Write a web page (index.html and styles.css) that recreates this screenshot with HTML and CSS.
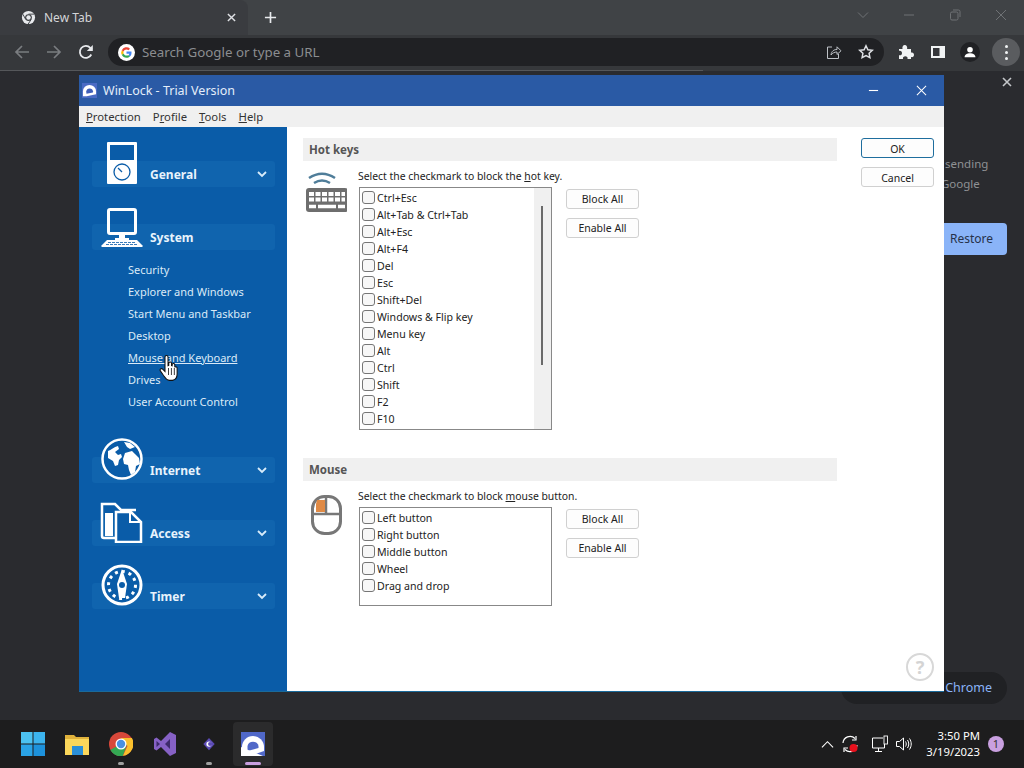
FILE: index.html
```html
<!DOCTYPE html>
<html>
<head>
<meta charset="utf-8">
<title>WinLock - Trial Version</title>
<link rel="stylesheet" href="styles.css">
</head>
<body>
<div class="tabstrip">
    <div class="tab">
        <svg class="tab-favicon" viewBox="0 0 16 16"><circle cx="8" cy="8" r="7" fill="#e8eaed"/><circle cx="8" cy="8" r="3.6" fill="#3c3f43"/><circle cx="8" cy="8" r="2.4" fill="#e8eaed"/><path d="M8 4.4h6M5 10 2 4.5M10.8 10.2 7.6 15" stroke="#3c3f43" stroke-width="1"/></svg>
        <span class="tab-title">New Tab</span>
        <svg class="tab-close" viewBox="0 0 10 10"><path d="M1 1l8 8M9 1l-8 8" stroke="#dfe1e5" stroke-width="1.6"/></svg>
    </div>
    <svg class="tab-new" viewBox="0 0 14 14"><path d="M7 1v12M1 7h12" stroke="#e8eaed" stroke-width="1.8"/></svg>
    <div class="caption">
        <svg viewBox="0 0 12 12"><path d="M1 3.500l5 5 5-5" fill="none" stroke="#6f7275" stroke-width="1"/></svg>
        <svg viewBox="0 0 12 12"><path d="M1 6h10" stroke="#6f7275" stroke-width="1"/></svg>
        <svg viewBox="0 0 12 12"><rect x="1.500" y="3" width="7.500" height="8" rx="1.500" fill="none" stroke="#6f7275"/><path d="M4 1h5.500a1.500 1.500 0 0 1 1.500 1.500V8" fill="none" stroke="#6f7275"/></svg>
        <svg viewBox="0 0 12 12"><path d="M1 1l10 10M11 1L1 11" stroke="#6f7275" stroke-width="1"/></svg>
    </div>
</div>
<div class="toolbar">
    <div class="nav">
        <svg viewBox="0 0 16 16"><path d="M15 8H2M8 2 2 8l6 6" fill="none" stroke="#7a7d80" stroke-width="1.700"/></svg>
        <svg viewBox="0 0 16 16"><path d="M1 8h13M8 2l6 6-6 6" fill="none" stroke="#7a7d80" stroke-width="1.700"/></svg>
        <svg viewBox="0 0 16 16"><path d="M13.300 10.500A6 6 0 1 1 12.300 3.800L14 5.500" fill="none" stroke="#e8eaed" stroke-width="1.800"/><path d="M14.800 1v6h-6z" fill="#e8eaed"/></svg>
    </div>
    <div class="omnibox">
        <svg class="g-logo" viewBox="0 0 18 18">
            <circle cx="9" cy="9" r="9" fill="#fff"/>
            <path d="M14.300 9.200c0-.4 0-.8-.1-1.200H9v2.200h3a2.600 2.600 0 0 1-1.100 1.700l1.800 1.400c1-1 1.600-2.400 1.600-4.100z" fill="#4285f4"/>
            <path d="M9 14.500c1.500 0 2.700-.5 3.700-1.300l-1.800-1.400c-.5.300-1.100.5-1.900.5-1.400 0-2.700-1-3.100-2.300L4 11.400c.9 1.900 2.800 3.100 5 3.100z" fill="#34a853"/>
            <path d="M5.900 10A3.300 3.300 0 0 1 5.900 8L4 6.600a5.600 5.600 0 0 0 0 4.800z" fill="#fbbc05"/>
            <path d="M9 5.700c.8 0 1.500.3 2.100.8l1.600-1.600A5.500 5.500 0 0 0 4 6.600L5.900 8C6.300 6.700 7.600 5.700 9 5.700z" fill="#ea4335"/>
        </svg>
        <span class="omnibox-text">Search Google or type a URL</span>
        <div class="omnibox-actions">
            <svg viewBox="0 0 16 16"><path d="M6 3H1.500v11.500h11V10" fill="none" stroke="#bdc1c6"/><path d="M5 11c.5-4 3-5.500 6-5.500V2.800l4 4-4 3.700V8C8.500 8 6.500 9 5 11z" fill="none" stroke="#bdc1c6"/></svg>
            <svg viewBox="0 0 16 16"><path d="M8 1.800l1.900 4 4.400.5-3.200 3 .8 4.400L8 11.600l-3.900 2.100.8-4.400-3.200-3 4.400-.5z" fill="none" stroke="#dfe1e5" stroke-width="1.500"/></svg>
        </div>
    </div>
    <div class="tools">
        <svg viewBox="0 0 16 16"><path d="M1 5h3.500C4 3 5 1 6.800 1s2.800 2 2.300 4H13v3.500c2-.5 3 .7 3 2.300s-1 2.800-3 2.300V15H9.500c.5-2-.7-2.800-2.200-2.800S4.500 13 5 15H1v-3.800c2 .5 3-.7 3-2.200S3 6.300 1 6.800z" fill="#f1f3f4"/></svg>
        <svg viewBox="0 0 16 16"><path d="M1 2h14v12H1z" fill="#f1f3f4"/><path d="M3 4h6.500v8H3z" fill="#35363a"/></svg>
        <span class="profile"><svg viewBox="0 0 16 16"><circle cx="8" cy="5.500" r="3.200" fill="#fff"/><path d="M1.800 14c0-3 3-4.500 6.200-4.500s6.200 1.500 6.200 4.500z" fill="#fff"/></svg></span>
        <span class="menu-btn"><i></i><i></i><i></i></span>
    </div>
</div>

<div class="page">
    <svg class="promo-close" viewBox="0 0 10 10"><path d="M1 1l8 8M9 1l-8 8" stroke="#c4c7ca" stroke-width="1.600"/></svg>
    <div class="promo-text">sending<br>Google</div>
    <div class="promo-restore">Restore</div>
    <div class="customize">Customize Chrome</div>

    <div class="window">
        <div class="titlebar">
            <svg class="app-icon" viewBox="0 0 16 16"><rect width="16" height="16" fill="#4a6bc4"/><path d="M1 9a7 7 0 0 1 14 0v3L5 14H1z" fill="#fff"/><path d="M4.500 9a3.700 3.700 0 0 1 7.300 0l-.2 1.200-6.800 1.200z" fill="#3f5fb8"/></svg>
            <span class="title-text">WinLock - Trial Version</span>
            <svg class="title-btn" viewBox="0 0 12 12"><path d="M1 6h10" stroke="#fff" stroke-width="1.200"/></svg>
            <svg class="title-btn" viewBox="0 0 12 12"><path d="M1 1l10 10M11 1L1 11" stroke="#fff" stroke-width="1.100"/></svg>
        </div>
        <div class="menubar">
            <span><u>P</u>rotection</span>
            <span>P<u>r</u>ofile</span>
            <span><u>T</u>ools</span>
            <span><u>H</u>elp</span>
        </div>
        <div class="client">
            <div class="sidebar">
                <div class="group">
                    <svg class="group-icon" viewBox="0 0 44 44"><rect x="7" y="2" width="30" height="42" rx="1" fill="#fff"/><rect x="10" y="5" width="24" height="15" fill="#0a5ca8"/><circle cx="22" cy="32" r="8" fill="none" stroke="#0a5ca8" stroke-width="1.300"/><path d="M22 32l-4-4" stroke="#0a5ca8" stroke-width="1.300"/></svg>
                    <span class="group-name">General</span>
                    <svg class="chevron" viewBox="0 0 10 8"><path d="M1 2l4 4 4-4" fill="none" stroke="#d8ecfa" stroke-width="1.800"/></svg>
                </div>
                <div class="group">
                    <svg class="group-icon" viewBox="0 0 44 44"><rect x="8.500" y="6.500" width="27" height="24" rx="1.500" fill="none" stroke="#fff" stroke-width="3"/><path d="M19 32h6v3h4v2H15v-2h4z" fill="#fff"/><path d="M7 37h30l6 6-1 1H2l-1-1z" fill="#fff"/><path d="M8 39.500h28M6 41.500h32" stroke="#0a5ca8" stroke-width=".8" stroke-dasharray="3 1"/></svg>
                    <span class="group-name">System</span>
                </div>
                <div class="sublist">
                    <a>Security</a>
                    <a>Explorer and Windows</a>
                    <a>Start Menu and Taskbar</a>
                    <a>Desktop</a>
                    <a class="hover">Mouse and Keyboard</a>
                    <a>Drives</a>
                    <a>User Account Control</a>
                </div>
                <div class="group internet">
                    <svg class="group-icon" viewBox="0 0 44 44"><circle cx="22" cy="23" r="19.500" fill="#0a5ca8" stroke="#fff" stroke-width="2.500"/><path d="M8 15c3-1 6-4 10-5l1 3-4 3 3 3 3-1 1 3-3 3-1 5-3 1-2-5-5-3zM24 6l6 1 5 4-5 2-3-2zM25 17l7-2 3 3 4 4 1 6-4 2-1 6-4 3-2-5-1-5-4-1-1-5z" fill="#fff"/></svg>
                    <span class="group-name">Internet</span>
                    <svg class="chevron" viewBox="0 0 10 8"><path d="M1 2l4 4 4-4" fill="none" stroke="#d8ecfa" stroke-width="1.800"/></svg>
                </div>
                <div class="group">
                    <svg class="group-icon" viewBox="0 0 44 44"><path d="M15 39H4a2 2 0 0 1-2-2V5h13l6 6h15" fill="none" stroke="#fff" stroke-width="2.500"/><path d="M5 14h8v23H5z" fill="#fff"/><path d="M16 43V13h15l10 10v20z" fill="#0a5ca8" stroke="#fff" stroke-width="2.500"/><path d="M30 14v9h10" fill="none" stroke="#fff" stroke-width="2"/></svg>
                    <span class="group-name">Access</span>
                    <svg class="chevron" viewBox="0 0 10 8"><path d="M1 2l4 4 4-4" fill="none" stroke="#d8ecfa" stroke-width="1.800"/></svg>
                </div>
                <div class="group">
                    <svg class="group-icon" viewBox="0 0 44 44"><circle cx="22" cy="23" r="19" fill="#0a5ca8" stroke="#fff" stroke-width="3"/><circle cx="22" cy="23" r="13.500" fill="none" stroke="#fff" stroke-width="3" stroke-dasharray="3 4"/><path d="M22 7l5 15-2 14h-6l-2-14z" fill="#fff"/><circle cx="22" cy="23" r="3" fill="#0a5ca8"/></svg>
                    <span class="group-name">Timer</span>
                    <svg class="chevron" viewBox="0 0 10 8"><path d="M1 2l4 4 4-4" fill="none" stroke="#d8ecfa" stroke-width="1.800"/></svg>
                </div>
                <svg class="hand" viewBox="0 0 16 24"><path d="M5 2.500a1.300 1.300 0 0 1 2.600 0V10l.6-.2V8a1.200 1.200 0 0 1 2.400 0v2l.5.100V9a1.200 1.200 0 0 1 2.300 0v2l.4.100a1.100 1.100 0 0 1 1.600 1v5c0 2.500-1.500 5-4 5.500H8.500C6 22.500 5 20 3.500 18L1 14.500c-.8-1.300.8-2.700 2-1.500L5 15z" fill="#fff" stroke="#111" stroke-width=".9"/><path d="M8 12v6M10.500 12v6M13 12v6" stroke="#111" stroke-width=".7"/></svg>
            </div>
            <div class="main">
                <div class="sections">
                    <div class="section">
                        <div class="section-head">Hot keys</div>
                        <div class="section-body">
                            <svg class="section-icon" viewBox="0 0 44 44"><path d="M6 7c9-6 17-6 26 0M11 12c5-3 11-3 16 0" fill="none" stroke="#4f7d99" stroke-width="2.500"/><rect x="3" y="17" width="42" height="24" rx="3" fill="#6e6e6e"/><path d="M6 23h36M6 28.500h36" stroke="#fff" stroke-width="4" stroke-dasharray="5 1.500"/><path d="M6 35.500h7M15 35.500h18M35 35.500h7" stroke="#fff" stroke-width="3.500"/></svg>
                            <div class="section-col">
                                <div class="hint">Select the checkmark to block the <u>h</u>ot key.</div>
                                <div class="list-row">
                                    <div class="listbox listbox-keys">
                                        <div class="scrollbar"><div class="thumb"></div></div>
                                        <label><span class="check"></span>Ctrl+Esc</label>
                                        <label><span class="check"></span>Alt+Tab &amp; Ctrl+Tab</label>
                                        <label><span class="check"></span>Alt+Esc</label>
                                        <label><span class="check"></span>Alt+F4</label>
                                        <label><span class="check"></span>Del</label>
                                        <label><span class="check"></span>Esc</label>
                                        <label><span class="check"></span>Shift+Del</label>
                                        <label><span class="check"></span>Windows &amp; Flip key</label>
                                        <label><span class="check"></span>Menu key</label>
                                        <label><span class="check"></span>Alt</label>
                                        <label><span class="check"></span>Ctrl</label>
                                        <label><span class="check"></span>Shift</label>
                                        <label><span class="check"></span>F2</label>
                                        <label><span class="check"></span>F10</label>
                                    </div>
                                    <div class="list-btns">
                                        <button class="btn">Block All</button>
                                        <button class="btn">Enable All</button>
                                    </div>
                                </div>
                            </div>
                        </div>
                    </div>
                    <div class="section">
                        <div class="section-head">Mouse</div>
                        <div class="section-body">
                            <svg class="section-icon" viewBox="0 0 44 44"><rect x="9.500" y="5.500" width="28" height="37" rx="12" fill="#fff" stroke="#777" stroke-width="3"/><path d="M9 23h29M23 6v17" stroke="#777" stroke-width="2.500"/><path d="M14 9h8v12h-9v-8z" fill="#e08a45"/></svg>
                            <div class="section-col">
                                <div class="hint">Select the checkmark to block <u>m</u>ouse button.</div>
                                <div class="list-row">
                                    <div class="listbox listbox-mouse">
                                        <label><span class="check"></span>Left button</label>
                                        <label><span class="check"></span>Right button</label>
                                        <label><span class="check"></span>Middle button</label>
                                        <label><span class="check"></span>Wheel</label>
                                        <label><span class="check"></span>Drag and drop</label>
                                    </div>
                                    <div class="list-btns">
                                        <button class="btn">Block All</button>
                                        <button class="btn">Enable All</button>
                                    </div>
                                </div>
                            </div>
                        </div>
                    </div>
                </div>
                <div class="dialog-btns">
                    <button class="btn btn-default">OK</button>
                    <button class="btn">Cancel</button>
                </div>
                <div class="help">?</div>
            </div>
        </div>
    </div>
</div>

<div class="taskbar">
    <div class="task-slot">
        <svg class="task-icon" viewBox="0 0 24 24"><path d="M0 0h11.500v11.500H0z" fill="#4cc2f1"/><path d="M12.500 0H24v11.500H12.500z" fill="#3cb4ee"/><path d="M0 12.500h11.500V24H0z" fill="#2aa3e6"/><path d="M12.500 12.500H24V24H12.500z" fill="#1d92dc"/></svg>
    </div>
    <div class="task-slot">
        <svg class="task-icon" viewBox="0 0 24 24"><path d="M0 3h9l2 2h13v18H0z" fill="#e0b23c"/><path d="M0 7h24v16H0z" fill="#fbd75b"/><path d="M7 14h11v9H7z" fill="#2a8fd8"/></svg>
    </div>
    <div class="task-slot running">
        <svg class="task-icon" viewBox="0 0 24 24"><circle cx="12" cy="12" r="12" fill="#d8483a"/><path d="M12 12 1.600 18A12 12 0 0 0 12 24z" fill="#34a853"/><path d="M1.600 18A12 12 0 0 0 14 23.800L18 12H12z" fill="#34a853"/><path d="M12 6h10.900A12 12 0 0 1 14 23.800L18.500 14z" fill="#fbc02d"/><circle cx="12" cy="12" r="5.500" fill="#fff"/><circle cx="12" cy="12" r="4.200" fill="#4a90e2"/></svg>
    </div>
    <div class="task-slot">
        <svg class="task-icon" viewBox="0 0 24 24"><path d="M17 0l6 3v18l-6 3-9-9-4.500 3.500L1 17V7l2.500-1.500L8 9z" fill="#8661c5"/><path d="M17 7l-5 5 5 5z" fill="#3d2a6b"/><path d="M3.500 9v6L7 12z" fill="#3d2a6b"/></svg>
    </div>
    <div class="task-slot running">
        <svg class="task-icon task-icon-small" viewBox="0 0 16 16"><path d="M8 1l6.500 7L8 15 1.500 8z" fill="#5b4bb5"/><circle cx="8" cy="8" r="3" fill="#fff"/><circle cx="9.300" cy="8" r="2.400" fill="#5b4bb5"/></svg>
    </div>
    <div class="task-slot active">
        <svg class="task-icon" viewBox="0 0 24 24"><rect width="24" height="24" fill="#5068c8"/><path d="M1 15a11 11 0 0 1 22 0v4L9 24H1z" fill="#fff"/><path d="M6.500 14a5.700 5.700 0 0 1 11 0v2L6.500 19z" fill="#5068c8"/><path d="M0 15l22 9H0z" fill="#fff"/></svg>
    </div>
    <div class="tray">
        <svg class="tray-icon chev-up" viewBox="0 0 14 14"><path d="M1 10l6-6 6 6" fill="none" stroke="#fff" stroke-width="1.200"/></svg>
        <span class="tray-sync">
            <svg class="tray-icon" viewBox="0 0 18 18"><path d="M2 8a7 7 0 0 1 12-4.500M16 10a7 7 0 0 1-12 4.500" fill="none" stroke="#fff" stroke-width="1.200"/><path d="M15 1v4h-4M3 17v-4h4" fill="none" stroke="#fff" stroke-width="1.200"/><circle cx="12.500" cy="13" r="4" fill="#e8101c"/></svg>
        </span>
        <svg class="tray-icon" viewBox="0 0 18 18"><path d="M12 3H1.500v10h12V9M7.500 13v3M4 16.500h7" fill="none" stroke="#fff"/><rect x="13" y="1" width="3.500" height="8" fill="none" stroke="#fff" stroke-width=".9"/></svg>
        <svg class="tray-icon" viewBox="0 0 18 18"><path d="M1.500 6.500h3l4-3.500v12l-4-3.500h-3z" fill="none" stroke="#fff"/><path d="M10.500 6.500c1 1.500 1 3.500 0 5M12.500 5c1.700 2.500 1.700 5.500 0 8M14.500 3.500c2.300 3.500 2.300 7.500 0 11" fill="none" stroke="#fff"/></svg>
        <div class="clock"><div>3:50 PM</div><div>3/19/2023</div></div>
        <span class="notify">1</span>
    </div>
</div>
</body>
</html>
```

FILE: styles.css
```css
body, html {
    margin: 0;
    height: 100%;
    overflow: hidden;
}

body {
    width: 1024px;
    height: 768px;
    display: flex;
    flex-direction: column;
    font-family: "Noto Sans", sans-serif;
    font-size: 11px;
    background-color: #292a2e;
}

svg {
    display: block;
    flex: none;
}

/* browser frame */
.tabstrip {
    height: 35px;
    display: flex;
    align-items: center;
    background-color: #404346;
}

.tab {
    width: 248px;
    height: 35px;
    box-sizing: border-box;
    padding: 0 9px 0 21px;
    display: flex;
    align-items: center;
    background-color: #3a3c40;
    border-radius: 0 8px 0 0;
}

.tab-favicon {
    width: 15px;
    height: 15px;
}

.tab-title {
    margin-left: 8px;
    flex: 1;
    font-size: 12px;
    color: #d3d5d8;
}

.tab-close {
    width: 9px;
    height: 9px;
    margin-right: 3px;
}

.tab-new {
    width: 13px;
    height: 13px;
    margin-left: 16px;
}

.caption {
    margin-left: auto;
    margin-right: 17px;
    margin-bottom: 6px;
    display: flex;
    gap: 34px;
}

.caption svg {
    width: 12px;
    height: 12px;
}

.toolbar {
    height: 36px;
    box-sizing: border-box;
    padding-bottom: 2px;
    display: flex;
    align-items: center;
    background: linear-gradient(#55575a, #55575a) 0 100% / 703px 1px no-repeat, #36383b;
}

.nav {
    width: 108px;
    box-sizing: border-box;
    padding-left: 14px;
    display: flex;
    gap: 16px;
}

.nav svg {
    width: 16px;
    height: 16px;
}

.omnibox {
    width: 776px;
    height: 28px;
    box-sizing: border-box;
    padding: 0 10px;
    display: flex;
    align-items: center;
    background-color: #202124;
    border-radius: 14px;
}

.g-logo {
    width: 17px;
    height: 17px;
}

.omnibox-text {
    margin-left: 7px;
    font-size: 13.300px;
    color: #8b8d90;
}

.omnibox-actions {
    margin-left: auto;
    display: flex;
    gap: 16px;
}

.omnibox-actions svg {
    width: 16px;
    height: 16px;
}

.tools {
    flex: 1;
    padding-left: 14px;
    display: flex;
    align-items: center;
    gap: 16px;
}

.tools > svg {
    width: 16px;
    height: 16px;
}

.profile {
    width: 20px;
    height: 20px;
    margin: 0 -2px;
    display: flex;
    align-items: center;
    justify-content: center;
    background-color: #202124;
    border-radius: 50%;
}

.profile svg {
    width: 14px;
    height: 14px;
}

.menu-btn {
    width: 28px;
    height: 28px;
    margin-left: -2px;
    display: flex;
    flex-direction: column;
    align-items: center;
    justify-content: center;
    gap: 3px;
    background-color: #5a5c5f;
    border-radius: 50%;
}

.menu-btn i {
    width: 3px;
    height: 3px;
    background-color: #f1f3f4;
    border-radius: 50%;
}

/* page behind the dialog */
.page {
    position: relative;
    flex: 1;
    background-color: #2a2b2f;
}

.promo-close {
    position: absolute;
    left: 1002px;
    top: 6px;
    width: 10px;
    height: 10px;
}

.promo-text {
    position: absolute;
    left: 941px;
    top: 83px;
    text-indent: 4px;
    font-size: 11.500px;
    line-height: 20px;
    color: #8f9194;
}

.promo-restore {
    position: absolute;
    left: 930px;
    top: 152px;
    width: 77px;
    height: 32px;
    box-sizing: border-box;
    padding-left: 20px;
    line-height: 32px;
    font-size: 12px;
    color: #26324a;
    background-color: #8ab4f8;
    border-radius: 4px;
}

.customize {
    position: absolute;
    right: 17px;
    top: 601px;
    height: 32px;
    padding: 0 15px 0 39px;
    line-height: 32px;
    font-size: 12.500px;
    color: #8ab4f8;
    background-color: #202124;
    border-radius: 16px;
}

/* dialog */
.window {
    position: absolute;
    left: 79px;
    top: 4px;
    width: 865px;
    height: 617px;
    display: flex;
    flex-direction: column;
    background-color: #fff;
    border-bottom: 1px solid #1a6a9a;
    box-sizing: border-box;
}

.titlebar {
    height: 31px;
    padding: 0 17px 0 3px;
    display: flex;
    align-items: center;
    background-color: #2a5aa5;
}

.app-icon {
    width: 15px;
    height: 15px;
}

.title-text {
    flex: 1;
    margin-left: 6px;
    font-size: 12.500px;
    color: #e4eefa;
}

.title-btn {
    width: 11px;
    height: 11px;
}

.title-btn + .title-btn {
    margin-left: 37px;
}

.menubar {
    height: 21px;
    padding-left: 7px;
    display: flex;
    align-items: center;
    gap: 12px;
    font-size: 11.300px;
    color: #333;
    background-color: #f0f0f0;
}

.client {
    flex: 1;
    display: flex;
}

.sidebar {
    position: relative;
    width: 208px;
    box-sizing: border-box;
    padding: 34px 12px 0 13px;
    display: flex;
    flex-direction: column;
    gap: 37px;
    background-color: #0a5ca8;
}

.group {
    position: relative;
    height: 26px;
    padding: 0 8px 0 58px;
    display: flex;
    align-items: center;
    background-color: #1064ae;
    border-radius: 3px;
}

.group-icon {
    position: absolute;
    left: 8px;
    bottom: 3px;
    width: 44px;
    height: 44px;
}

.group-name {
    flex: 1;
    font-size: 12px;
    font-weight: 700;
    color: #e8f3fc;
}

.chevron {
    width: 10px;
    height: 8px;
}

.sublist {
    margin: -28px 0 7px 36px;
    display: flex;
    flex-direction: column;
}

.sublist a {
    height: 22px;
    line-height: 22px;
    color: #dbeaf7;
}

.sublist .hover {
    text-decoration: underline;
}

.hand {
    position: absolute;
    left: 80px;
    top: 227px;
    width: 19px;
    height: 28px;
}

.main {
    position: relative;
    flex: 1;
    padding: 11px 10px 0 16px;
    display: flex;
    justify-content: space-between;
    align-items: flex-start;
    background-color: #fff;
}

.sections {
    width: 534px;
    display: flex;
    flex-direction: column;
    gap: 28px;
}

.section-head {
    height: 23px;
    padding-left: 6px;
    line-height: 23px;
    font-size: 11.500px;
    font-weight: 700;
    color: #555;
    background-color: #f0f0f0;
}

.section-body {
    display: flex;
}

.section-icon {
    width: 44px;
    height: 44px;
    margin: 10px 11px 0 0;
}

.section-col {
    flex: 1;
}

.hint {
    height: 26px;
    line-height: 30px;
    font-size: 10.400px;
    color: #222;
}

.list-row {
    display: flex;
    margin-left: 1px;
}

.listbox {
    position: relative;
    width: 193px;
    box-sizing: border-box;
    padding-top: 1px;
    overflow: hidden;
    border: 1px solid #888;
}

.listbox-keys {
    height: 243px;
}

.listbox-mouse {
    height: 99px;
}

.listbox label {
    height: 17px;
    padding-left: 1px;
    display: flex;
    align-items: center;
    font-size: 10.600px;
    color: #222;
}

.check {
    width: 11px;
    height: 11px;
    margin: 0 2px 0 1px;
    border: 1px solid #767676;
    border-radius: 3px;
    background-color: #f7f7f7;
}

.scrollbar {
    position: absolute;
    right: 0;
    top: 0;
    bottom: 0;
    width: 17px;
    background-color: #f0f0f0;
}

.thumb {
    width: 2px;
    height: 159px;
    margin: 18px 0 0 7px;
    background-color: #6a6a6a;
}

.list-btns {
    margin: 2px 0 0 14px;
    display: flex;
    flex-direction: column;
    gap: 9px;
}

.btn {
    width: 73px;
    height: 20px;
    padding: 0;
    font-family: inherit;
    font-size: 10.500px;
    color: #222;
    background-color: #fdfdfd;
    border: 1px solid #d0d0d0;
    border-radius: 3px;
}

.dialog-btns {
    display: flex;
    flex-direction: column;
    gap: 9px;
}

.dialog-btns .btn {
    padding-top: 1px;
}

.btn-default {
    border-color: #1f6e9e;
}

.help {
    position: absolute;
    right: 10px;
    bottom: 10px;
    width: 24px;
    height: 24px;
    text-align: center;
    line-height: 24px;
    font-size: 18px;
    font-weight: 700;
    color: #d4d4d4;
    border: 2px solid #d8d8d8;
    border-radius: 50%;
}

/* windows taskbar */
.taskbar {
    height: 48px;
    box-sizing: border-box;
    padding-left: 11px;
    display: flex;
    align-items: center;
    background-color: #1d1d1e;
}

.task-slot {
    position: relative;
    width: 44px;
    height: 44px;
    display: flex;
    align-items: center;
    justify-content: center;
}

.task-icon {
    width: 24px;
    height: 24px;
}

.task-icon-small {
    width: 14px;
    height: 14px;
}

.running::after, .active::after {
    content: "";
    position: absolute;
    left: 50%;
    bottom: 1px;
    width: 6px;
    height: 3px;
    margin-left: -3px;
    background-color: #a0a0a0;
    border-radius: 2px;
}

.active {
    width: 40px;
    margin: 0 2px;
    background-color: #2b2b2c;
    border-radius: 4px;
}

.active::after {
    width: 16px;
    margin-left: -8px;
    background-color: #c9a0e0;
}

.tray {
    margin-left: auto;
    padding-right: 20px;
    display: flex;
    align-items: center;
    color: #fff;
    position: relative;
}

.tray-icon {
    width: 18px;
    height: 18px;
    margin-right: 6px;
}

.chev-up {
    width: 13px;
    height: 13px;
    margin-right: 7px;
}

.tray-sync {
    margin-right: 6px;
}

.clock {
    margin: 0 8px 0 7px;
    text-align: right;
    font-size: 11.300px;
    line-height: 16px;
}

.notify {
    width: 16px;
    height: 16px;
    text-align: center;
    line-height: 16px;
    font-size: 11px;
    color: #333;
    background-color: #c9a0e0;
    border-radius: 50%;
}
```
